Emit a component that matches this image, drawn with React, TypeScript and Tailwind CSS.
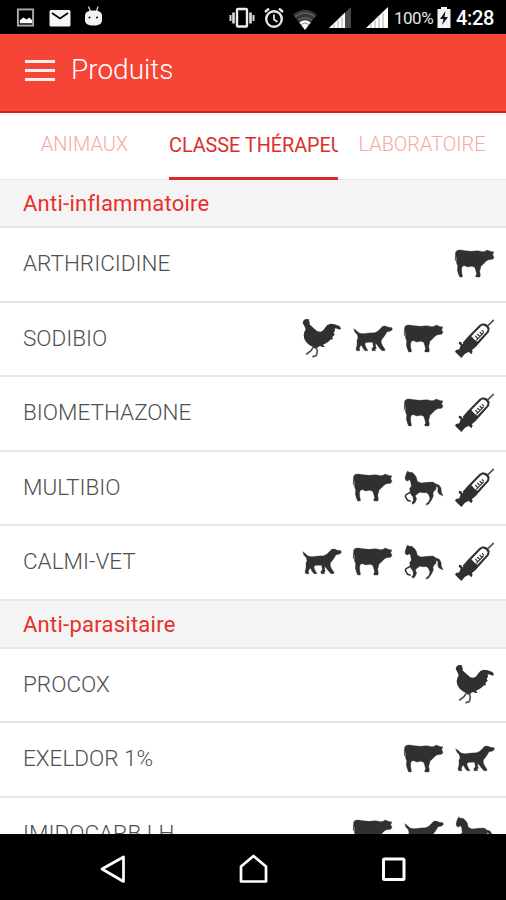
import type { ReactNode } from 'react';

type IconName = 'rooster' | 'dog' | 'cow' | 'horse' | 'syringe';

interface Product {
  name: string;
  icons: IconName[];
}

interface Section {
  title: string;
  products: Product[];
}

const sections: Section[] = [
  {
    title: 'Anti-inflammatoire',
    products: [
      { name: 'ARTHRICIDINE', icons: ['cow'] },
      { name: 'SODIBIO', icons: ['rooster', 'dog', 'cow', 'syringe'] },
      { name: 'BIOMETHAZONE', icons: ['cow', 'syringe'] },
      { name: 'MULTIBIO', icons: ['cow', 'horse', 'syringe'] },
      { name: 'CALMI-VET', icons: ['dog', 'cow', 'horse', 'syringe'] },
    ],
  },
  {
    title: 'Anti-parasitaire',
    products: [
      { name: 'PROCOX', icons: ['rooster'] },
      { name: 'EXELDOR 1%', icons: ['cow', 'dog'] },
      { name: 'IMIDOCARB LH', icons: ['cow', 'dog', 'horse'] },
    ],
  },
];

const viewBoxes: Record<IconName, string> = {
  rooster: '22 40 120 120',
  dog: '175 40 120 120',
  cow: '13 40 120 120',
  horse: '177 37 120 120',
  syringe: '165 39 120 120',
};

const shapes: Record<IconName, ReactNode> = {
  rooster: (
    <>
      <path d="M24 52L26 45L31 41L38 40L45 42L42 46L46 50L44 55L50 61L60 70L68 77L78 78L86 74L91 66L98 58L108 54L120 56L134 61L139 68L136 72L128 69L120 68L121 75L117 81L120 87L113 94L115 100L107 102L101 108L94 113L85 117L90 124L83 124L76 121L70 124L66 130L59 128L55 124L45 119L36 111L29 100L27 89L29 79L33 71L30 63L27 57Z" />
      <path d="M56 124L49 135L36 145M65 127L68 136L65 150L55 153" fill="none" stroke="#555" strokeWidth="5" strokeLinecap="round" />
    </>
  ),
  dog: (
    <path
      d="M177 69L184 74L193 82L205 84L224 82L240 81L249 77L257 69L264 62L272 61L282 65L292 66L293 72L286 77L277 78L272 87L265 97L260 103L260 112L264 121L270 129L271 135L262 135L255 128L247 117L243 113L243 121L245 128L241 131L243 135L233 135L231 130L236 123L234 110L220 110L212 111L211 117L215 127L220 135L211 135L205 128L200 118L196 123L194 129L196 135L186 135L184 129L187 118L187 104L190 96L188 87L181 80Z"
      stroke="#303030"
      strokeLinejoin="round"
    />
  ),
  cow: (
    <path
      d="M15 64L20 59L30 58L44 60L62 62L81 60L97 63L106 61L108 58L115 60L123 63L129 63L128 68L126 72L130 80L126 86L114 87L107 91L99 99L91 107L89 115L87 122L89 132L88 139L76 139L75 134L78 131L75 118L72 110L64 107L51 109L42 105L36 106L33 113L33 125L35 134L35 139L27 139L24 132L20 119L21 106L17 95L18 83L17 76L16 86L14 91L14 75Z"
      stroke="#303030"
      strokeLinejoin="round"
    />
  ),
  horse: (
    <>
      <path
        d="M180 67L184 53L188 46L193 50L201 50L209 57L214 65L217 77L228 82L246 80L264 79L273 85L282 88L288 97L289 109L294 121L282 115L278 107L279 96L274 92L273 101L267 107L264 112L265 121L260 132L251 145L243 149L244 144L251 138L255 128L251 117L245 111L234 111L224 110L217 115L211 120L215 130L210 141L204 146L200 142L205 135L204 124L197 115L195 107L194 98L199 92L197 79L194 72L187 76L182 74Z"
        stroke="#303030"
        strokeLinejoin="round"
      />
      <path d="M198 109L183 117L181 123L188 134L197 137" fill="none" stroke="#303030" strokeWidth="4.5" />
    </>
  ),
  syringe: (
    <>
      <path d="M280 43L261 62" stroke="#555" strokeWidth="5" strokeLinecap="round" />
      <path d="M188 110L203 93L238 57L248 52L260 55L269 66L267 78L227 123L209 138Z" />
      <path d="M214 91L241 63L248 58L258 62L263 70L260 77L232 107L224 101Z" fill="#fff" />
      <path d="M226 90L233 98M232 84L240 92M239 78L246 85M246 73L251 78M229 103L251 80" fill="none" stroke="#303030" strokeWidth="3.5" />
      <path d="M177 107L184 109L187 115L194 111L218 136L215 144L210 142L207 137L195 143L184 156L165 137L168 132L178 130L182 118L176 113Z" />
    </>
  ),
};

function ProductIcon({ name }: { name: IconName }) {
  return (
    <svg viewBox={viewBoxes[name]} className="size-10 overflow-visible" fill="#303030">
      {shapes[name]}
    </svg>
  );
}

function StatusBar() {
  return (
    <header className="flex h-[34px] shrink-0 items-center bg-black pl-4 pr-[11px] pt-px text-white">
      <svg viewBox="0 0 20 20" className="size-[19px]">
        <rect x="2" y="1.5" width="16" height="17" fill="none" stroke="#aaa" strokeWidth="2" />
        <path d="M4 16v-3l4-3 3 2 3-2 3 3v3z" fill="#fff" />
      </svg>
      <svg viewBox="0 0 22 18" className="ml-[13.5px] h-[18px] w-[22px]">
        <rect x="0.5" y="1" width="21" height="16.5" rx="1.5" fill="#f4f4f4" />
        <path d="M3 4l8 5.5L19 4" fill="none" stroke="#000" strokeWidth="1.6" />
      </svg>
      <svg viewBox="0 0 20 22" className="mb-1 ml-3 h-[22px] w-5">
        <path d="M5.5 1.5l2 5M15 1.5l-1.5 5" stroke="#ccc" strokeWidth="1.4" />
        <path d="M2 11c0-4 3-5.5 8.5-5.5S19 7 19 11v4.5c0 3-3 5-8.5 5S2 18.500 2 15.500z" fill="#f2f2f2" />
        <circle cx="6.5" cy="12.5" r="1" fill="#000" />
        <circle cx="14" cy="12.5" r="1" fill="#000" />
      </svg>

      <svg viewBox="0 0 26 22" className="ml-auto h-[22px] w-[26px] shrink-0">
        <rect x="8" y="2" width="10" height="17.5" rx="1" fill="none" stroke="#eee" strokeWidth="2.4" />
        <path d="M4.5 5.5v11M21.5 5.5v11" stroke="#ddd" strokeWidth="2.6" />
        <path d="M1.5 8v6M24.5 8v6" stroke="#ddd" strokeWidth="2" />
      </svg>
      <svg viewBox="0 0 22 22" className="ml-2 size-[22px] shrink-0" fill="none" stroke="#e8e8e8">
        <circle cx="11" cy="12" r="7.8" strokeWidth="2.4" />
        <path d="M11 7.5v5l3.5 2.5" strokeWidth="1.7" />
        <path d="M2 5l4-3.3M20 5l-4-3.3" strokeWidth="2.3" />
      </svg>
      <svg viewBox="0 0 26 22" className="ml-[7px] mt-1 h-[22px] w-[26px] shrink-0" fill="none">
        <path d="M1 5.5Q13-4 25 5.5L13 21z" fill="#363636" />
        <path d="M3 8Q13 0 23 8M6 11.5Q13 6 20 11.5" stroke="#606060" strokeWidth="1.5" />
        <path d="M7.3 13.5Q13 9 18.7 13.5L13 21z" fill="#fff" />
        <path d="M9 15.5Q13 12.5 17 15.5" stroke="#888" />
      </svg>
      <svg viewBox="0 0 23 21" className="ml-[11px] h-[21px] w-[23px] shrink-0">
        <path d="M0 21L22 0v21z" fill="#484848" />
        <path d="M0 21L16 5.500V21z" fill="#fff" />
        <path d="M5 17v4M9 13v8M13 10v11" stroke="#aaa" />
      </svg>
      <svg viewBox="0 0 23 21" className="ml-[14px] h-[21px] w-[23px] shrink-0">
        <path d="M0 21L22 0v21z" fill="#fff" />
        <path d="M5 17v4M9 13v8M13 10v11M17 6v15" stroke="#aaa" />
      </svg>
      <span className="ml-[5px] mt-[3px] w-[41px] whitespace-nowrap text-[17px] tracking-[-0.5px] text-[#e4e4e4]">100%</span>
      <svg viewBox="0 0 14 21" className="ml-[2px] h-[21px] w-[14px] shrink-0">
        <path d="M4 0h6v2h3.5v19H.5V2H4z" fill="#f2f2f2" />
        <path d="M8.5 4L3 12h3.500L5 18l6-8H7.500z" fill="#111" />
      </svg>
      <span className="ml-[5px] w-[39px] whitespace-nowrap text-[20px] font-medium tracking-[-0.3px]">4:28</span>
    </header>
  );
}

function NavigationBar() {
  return (
    <nav className="flex h-[66px] shrink-0 items-center justify-between bg-black px-[98px] pt-1.5">
      <svg viewBox="0 0 30 32" className="h-8 w-[30px]" fill="none" stroke="#fff" strokeWidth="2.7">
        <path d="M4 15L25.5 3V27.500z" strokeLinejoin="round" />
      </svg>
      <svg viewBox="0 0 32 32" className="size-8" fill="none" stroke="#fff" strokeWidth="2.7">
        <path d="M4 12.5L16.500 2L29 12.500V27.500H4z" strokeLinejoin="round" />
      </svg>
      <svg viewBox="0 0 30 32" className="h-8 w-[30px]" fill="none" stroke="#fff" strokeWidth="3">
        <rect x="5.5" y="5" width="20.5" height="20.5" rx="1" />
      </svg>
    </nav>
  );
}

export default function App() {
  return (
    <div className="flex h-[900px] w-[506px] flex-col overflow-hidden bg-white font-['Roboto',sans-serif]">
      <StatusBar />

      {/* Title bar */}
      <div className="flex h-[79px] shrink-0 items-center border-b-2 border-[#df1d18] bg-[#f64436] pb-[5px] pl-[25px] text-white">
        <div className="flex w-[30px] flex-col gap-[6px]">
          <span className="h-[3px] bg-[#fff0ee]" />
          <span className="h-[3px] bg-[#fff0ee]" />
          <span className="h-[3px] bg-[#fff0ee]" />
        </div>
        <h1 className="ml-4 text-[28px] font-light leading-none">Produits</h1>
      </div>

      {/* Tabs */}
      <div className="grid h-[67px] shrink-0 grid-cols-[169px_169px_168px] border-b border-[#e6e6e6] text-[20px] font-light leading-[61px] text-[#f4a9a8]">
        <button className="pb-[3px] text-center">ANIMAUX</button>
        <button className="-mb-px overflow-hidden whitespace-nowrap border-b-[3px] border-[#d92b2b] text-left text-[19.8px] font-normal text-[#db2e2b]">
          CLASSE THÉRAPEU
        </button>
        <button className="pb-[3px] text-center text-[19.9px]">LABORATOIRE</button>
      </div>

      {/* Product list */}
      <main className="min-h-0 flex-1 overflow-hidden">
        {sections.map((section) => (
          <section key={section.title}>
            <h2 className="flex h-12 items-center border-b-2 border-[#e6e6e6] bg-[#f4f4f4] pl-[23px] pt-px text-[22px] tracking-[0.25px] text-[#e8302a]">
              {section.title}
            </h2>
            {section.products.map((product) => (
              <div
                key={product.name}
                className="flex h-[74.5px] items-center justify-between border-b-2 border-[#e6e6e6] pl-[23px] pr-[11px]"
              >
                <span className="text-[22.5px] font-light text-[#505050]">{product.name}</span>
                <div className="flex gap-[11px]">
                  {product.icons.map((icon) => (
                    <ProductIcon key={icon} name={icon} />
                  ))}
                </div>
              </div>
            ))}
          </section>
        ))}
      </main>

      <NavigationBar />
    </div>
  );
}
